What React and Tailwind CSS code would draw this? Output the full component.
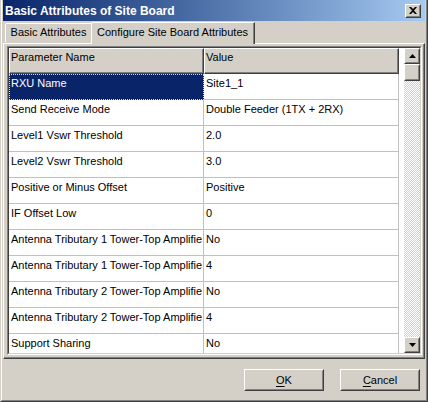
import React from "react";

const rows = [
  { name: "RXU Name", value: "Site1_1" },
  { name: "Send Receive Mode", value: "Double Feeder (1TX + 2RX)" },
  { name: "Level1 Vswr Threshold", value: "2.0" },
  { name: "Level2 Vswr Threshold", value: "3.0" },
  { name: "Positive or Minus Offset", value: "Positive" },
  { name: "IF Offset Low", value: "0" },
  { name: "Antenna Tributary 1 Tower-Top Amplifie", value: "No" },
  { name: "Antenna Tributary 1 Tower-Top Amplifie", value: "4" },
  { name: "Antenna Tributary 2 Tower-Top Amplifie", value: "No" },
  { name: "Antenna Tributary 2 Tower-Top Amplifie", value: "4" },
  { name: "Support Sharing", value: "No" },
];

// classic raised 3d box, two pixel frame
const Raised = ({ className = "", children }) => (
  <div
    className={`border border-t-white border-l-white border-r-[#404040] border-b-[#404040] ${className}`}
  >
    <div className="w-full h-full border border-t-[#d4d0c8] border-l-[#d4d0c8] border-r-[#808080] border-b-[#808080] flex items-center justify-center">
      {children}
    </div>
  </div>
);

const Arrow = ({ down }) => (
  <svg width="7" height="4" viewBox="0 0 7 4">
    {down ? (
      <polygon points="0,0 7,0 3.5,4" fill="#000" />
    ) : (
      <polygon points="0,4 7,4 3.5,0" fill="#000" />
    )}
  </svg>
);

const App = () => {
  return (
    <div className="w-[428px] h-[402px] bg-[#d4d0c8] font-['Liberation_Sans',Arial,sans-serif] text-[11px] text-black border-r border-b border-r-[#404040] border-b-[#404040] border-l border-l-[#d4d0c8] overflow-hidden">
      <div className="w-full h-full flex flex-col border-l border-l-white border-r border-r-[#808080] border-b border-b-[#808080] pl-px pr-px pb-px">
        {/* title bar */}
        <div className="h-[21px] shrink-0 flex items-center justify-between bg-linear-to-r from-[#0a246a] to-[#a6caf0] pl-[2px] pr-[4px]">
          <span className="text-white font-bold text-[12px] leading-none">
            Basic Attributes of Site Board
          </span>
          <Raised className="w-[16px] h-[14px] bg-[#d4d0c8]">
            <svg width="8" height="7" viewBox="0 0 8 7">
              <path
                d="M0 0h2l2 2 2-2h2L5 3.5 8 7H6L4 5 2 7H0l3-3.5z"
                fill="#000"
              />
            </svg>
          </Raised>
        </div>

        {/* tabs */}
        <div className="h-[22px] shrink-0 flex items-end pl-[2px]">
          <div className="h-[19px] w-[86px] mb-px border-t border-l border-t-white border-l-white rounded-tl-[2px] flex items-center justify-center pb-[2px]">
            Basic Attributes
          </div>
          <div className="relative z-10 h-[22px] w-[164px] -mb-px bg-[#d4d0c8] border-t border-l border-t-white border-l-white border-r border-r-[#404040] rounded-tl-[2px] flex">
            <div className="flex-1 border-r border-r-[#808080] flex items-center justify-center pb-[3px]">
              Configure Site Board Attributes
            </div>
          </div>
        </div>

        {/* tab page */}
        <div className="h-[316px] shrink-0 border-t border-l border-t-white border-l-white border-r border-b border-r-[#404040] border-b-[#404040]">
          <div className="w-full h-full border-r border-b border-r-[#808080] border-b-[#808080] pl-[3px] pt-[2px] pr-[1px] pb-[2px]">
            {/* grid, sunken */}
            <div className="w-full h-full border border-t-[#808080] border-l-[#808080] border-r-white border-b-white">
              <div className="w-full h-full border border-t-[#404040] border-l-[#404040] border-r-[#d4d0c8] border-b-[#d4d0c8] bg-white flex overflow-hidden">
                <div className="flex-1 flex flex-col overflow-hidden">
                  <div className="h-[26px] shrink-0 flex bg-[#d4d0c8]">
                    <div className="w-[195px] border-t border-l border-t-white border-l-white border-r border-b border-r-[#404040] border-b-[#404040]">
                      <div className="h-full border-r border-b border-r-[#808080] border-b-[#808080] pl-px pt-[2px] leading-[13px]">
                        Parameter Name
                      </div>
                    </div>
                    <div className="w-[195px] border-t border-l border-t-white border-l-white border-r border-b border-r-[#404040] border-b-[#404040]">
                      <div className="h-full border-r border-b border-r-[#808080] border-b-[#808080] pl-px pt-[2px] leading-[13px]">
                        Value
                      </div>
                    </div>
                    <div className="flex-1 bg-white" />
                  </div>
                  {rows.map((row, i) => (
                    <div key={i} className="h-[26px] shrink-0 flex">
                      <div
                        className={`w-[195px] overflow-hidden whitespace-nowrap pl-[2px] pt-[3px] leading-[13px] ${
                          i === 0
                            ? "bg-[#0a246a] text-white outline outline-1 outline-dotted outline-[#e8d890] -outline-offset-1"
                            : "border-r border-b border-[#c0c0c0]"
                        }`}
                      >
                        {row.name}
                      </div>
                      <div className="w-[195px] overflow-hidden whitespace-nowrap pl-[2px] pt-[3px] leading-[13px] border-r border-b border-[#c0c0c0]">
                        {row.value}
                      </div>
                    </div>
                  ))}
                </div>

                {/* scrollbar */}
                <div className="w-[16px] shrink-0 flex flex-col">
                  <Raised className="h-[16px] shrink-0 bg-[#d4d0c8]">
                    <Arrow />
                  </Raised>
                  <Raised className="h-[17px] shrink-0 bg-[#d4d0c8]" />
                  <div className="flex-1 bg-[image:repeating-conic-gradient(#ffffff_0%_25%,#d4d0c8_0%_50%)] bg-[length:2px_2px]" />
                  <Raised className="h-[16px] shrink-0 bg-[#d4d0c8]">
                    <Arrow down />
                  </Raised>
                </div>
              </div>
            </div>
          </div>
        </div>

        {/* buttons */}
        <div className="flex justify-end gap-[16px] pt-[10px] pr-[5px]">
          <Raised className="w-[80px] h-[22px] bg-[#d4d0c8]">
            <span>
              <span className="underline underline-offset-2">O</span>K
            </span>
          </Raised>
          <Raised className="w-[80px] h-[22px] bg-[#d4d0c8]">
            <span>
              <span className="underline underline-offset-2">C</span>ancel
            </span>
          </Raised>
        </div>
      </div>
    </div>
  );
};

export default App;
